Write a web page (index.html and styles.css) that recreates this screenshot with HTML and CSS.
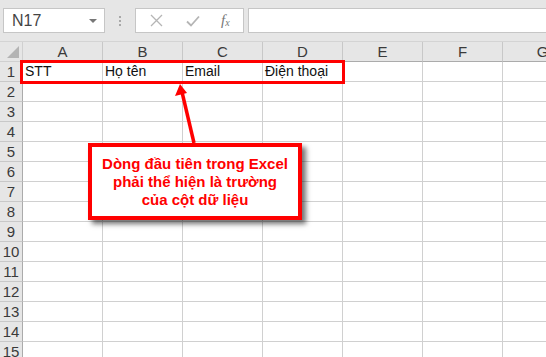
FILE: index.html
```html
<!DOCTYPE html>
<html lang="en">
<head>
    <meta charset="UTF-8">
    <title>Excel - Dòng tiêu đề</title>
    <link rel="stylesheet" href="styles.css">
</head>
<body>
    <div class="toolbar">
        <div class="name-box">
            <span>N17</span>
            <span class="drop"></span>
        </div>
        <div class="dots"><i></i><i></i><i></i></div>
        <div class="fx-box">
            <svg class="fx-cross" width="13" height="13" viewBox="0 0 13 13"><path d="M1 1 L12 12 M12 1 L1 12" fill="none" stroke="#b5b5b5" stroke-width="1.3"/></svg>
            <svg class="fx-check" width="14" height="12" viewBox="0 0 14 12"><path d="M1 6.5 L5 10.5 L13 1.5" fill="none" stroke="#b5b5b5" stroke-width="1.8"/></svg>
            <span class="fx-label">f<sub>x</sub></span>
        </div>
        <div class="formula"></div>
    </div>

    <div class="sheet">
        <div class="grid" id="grid">
            <div class="corner"><span class="tri"></span></div>
            <div class="col-head">A</div>
            <div class="col-head">B</div>
            <div class="col-head">C</div>
            <div class="col-head">D</div>
            <div class="col-head">E</div>
            <div class="col-head">F</div>
            <div class="col-head">G</div>

            <div class="row-head">1</div>
            <div class="cell">STT</div>
            <div class="cell">Họ tên</div>
            <div class="cell">Email</div>
            <div class="cell">Điện thoại</div>
            <div class="cell"></div>
            <div class="cell"></div>
            <div class="cell"></div>
        </div>

        <!-- overlay: highlight of row 1, arrow and note -->
        <div class="highlight"></div>
        <svg class="arrow" width="546" height="357" viewBox="0 0 546 357">
            <line x1="194" y1="143" x2="182" y2="92" stroke="#ff0000" stroke-width="3.5"/>
            <polygon points="180,84 175,96 187,93" fill="#ff0000"/>
        </svg>
        <div class="note">
            Dòng đầu tiên trong Excel<br>
            phải thể hiện là trường<br>
            của cột dữ liệu
        </div>
    </div>

    <script>
        // empty rows 2..15
        var grid = document.getElementById('grid');
        for (var r = 2; r <= 15; r++) {
            var html = '<div class="row-head">' + r + '</div>';
            for (var c = 0; c < 7; c++) {
                html += '<div class="cell"></div>';
            }
            grid.insertAdjacentHTML('beforeend', html);
        }
    </script>
</body>
</html>
```

FILE: styles.css
```css
body {
    margin: 0;
    width: 546px;
    height: 357px;
    overflow: hidden;
    background-color: #ffffff;
    font-family: "Liberation Sans", Arial, sans-serif;
    color: #222;
}

/* Formula bar */
.toolbar {
    height: 42px;
    box-sizing: border-box;
    background-color: #e6e6e6;
    border-bottom: 1px solid #d4d4d4;
    display: flex;
    align-items: flex-start;
    padding-top: 8px;
    padding-left: 3px;
}

.name-box {
    width: 102px;
    height: 25px;
    box-sizing: border-box;
    background-color: #ffffff;
    border: 1px solid #c6c6c6;
    display: flex;
    align-items: center;
    justify-content: space-between;
    padding: 0 7px 0 8px;
    font-size: 16px;
    color: #444;
}

.drop {
    width: 0;
    height: 0;
    border-left: 4px solid transparent;
    border-right: 4px solid transparent;
    border-top: 4px solid #777;
}

.dots {
    width: 30px;
    height: 25px;
    display: flex;
    flex-direction: column;
    align-items: center;
    justify-content: center;
    gap: 2px;
}

.dots i {
    width: 2px;
    height: 2px;
    background-color: #a8a8a8;
}

.fx-box {
    width: 109px;
    height: 25px;
    box-sizing: border-box;
    background-color: #ffffff;
    border: 1px solid #c6c6c6;
    display: flex;
    align-items: center;
    padding-left: 14px;
}

.fx-cross {
    margin-right: 23px;
}

.fx-label {
    margin-left: 21px;
    font-family: "Liberation Serif", serif;
    font-style: italic;
    font-size: 15px;
    color: #777;
}

.fx-label sub {
    font-size: 10px;
    vertical-align: -1px;
}

.formula {
    margin-left: 4px;
    flex: 1;
    height: 25px;
    box-sizing: border-box;
    background-color: #ffffff;
    border: 1px solid #c6c6c6;
    border-right: none;
}

/* Sheet grid */
.sheet {
    position: relative;
    height: 315px;
    overflow: hidden;
}

.grid {
    display: grid;
    grid-template-columns: 23px repeat(7, 80px);
    grid-auto-rows: 20px;
    width: 583px;
}

.grid > div {
    box-sizing: border-box;
    border-right: 1px solid #d0d0d0;
    border-bottom: 1px solid #d0d0d0;
    font-size: 14px;
    line-height: 19px;
}

.corner {
    background-color: #e6e6e6;
    position: relative;
}

.tri {
    position: absolute;
    right: 3px;
    bottom: 3px;
    width: 0;
    height: 0;
    border-left: 12px solid transparent;
    border-bottom: 12px solid #b4b4b4;
}

.grid > .col-head,
.grid > .row-head {
    background-color: #e6e6e6;
    text-align: center;
    color: #3a3a3a;
    font-size: 15px;
}

.grid > .col-head {
    border-right-color: #c8c8c8;
    border-bottom-color: #ababab;
}

.grid > .row-head {
    border-right-color: #ababab;
    border-bottom-color: #c8c8c8;
}

.cell {
    padding-left: 2px;
    white-space: nowrap;
    color: #111;
}

/* Overlay */
.highlight {
    position: absolute;
    left: 20px;
    top: 18px;
    width: 325px;
    height: 24px;
    box-sizing: border-box;
    border: 3.5px solid #ff0000;
}

.arrow {
    position: absolute;
    left: 0;
    top: -42px;
}

.note {
    position: absolute;
    left: 88px;
    top: 101px;
    width: 214px;
    height: 77px;
    box-sizing: border-box;
    background-color: #ffffff;
    border: 4px solid #ff0000;
    box-shadow: 4px 4px 5px rgba(0, 0, 0, 0.55);
    color: #ff0000;
    font-weight: bold;
    font-size: 15px;
    line-height: 18px;
    text-align: center;
    padding-top: 8px;
}
```
